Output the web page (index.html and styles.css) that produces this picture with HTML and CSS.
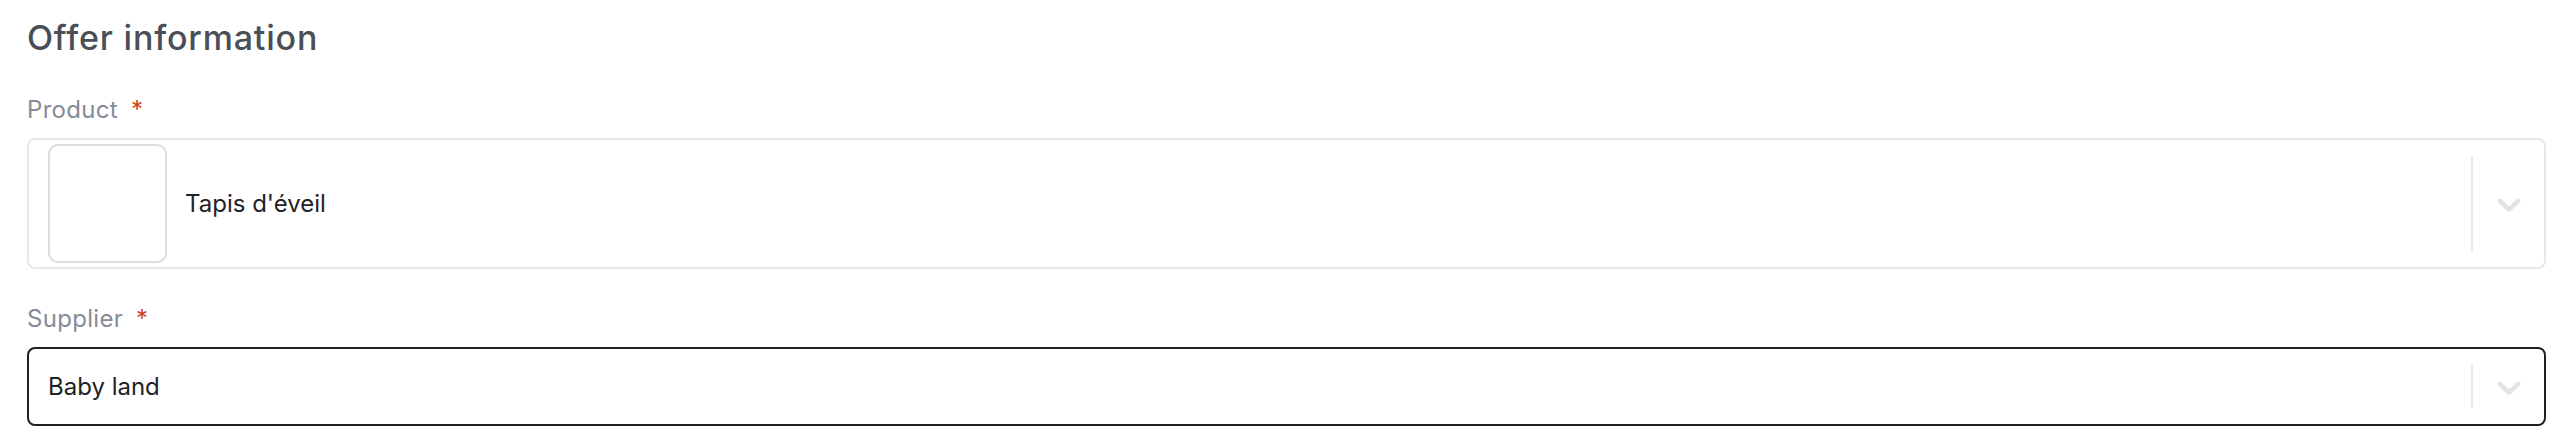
FILE: index.html
```html
<!DOCTYPE html>
<html lang="en">
<head>
    <meta charset="UTF-8">
    <meta name="viewport" content="width=device-width, initial-scale=1.0">
    <title>Offer information</title>
    <link rel="stylesheet" href="styles.css">
</head>
<body>
    <div class="offer-form">
        <h2>Offer information</h2>

        <!-- Product select -->
        <div class="field">
            <label class="field-label">Product <span class="required">*</span></label>
            <div class="select select-product">
                <div class="select-value">
                    <div class="product-thumb"></div>
                    <span class="select-text">Tapis d'éveil</span>
                </div>
                <span class="select-separator"></span>
                <div class="select-indicator">
                    <svg viewBox="0 0 20 20" width="40" height="40"><path d="M4.516 7.548c0.436-0.446 1.043-0.481 1.576 0l3.908 3.747 3.908-3.747c0.533-0.481 1.141-0.446 1.574 0 0.436 0.445 0.408 1.197 0 1.615-0.406 0.418-4.695 4.502-4.695 4.502-0.217 0.223-0.502 0.335-0.787 0.335s-0.57-0.112-0.789-0.335c0 0-4.287-4.084-4.695-4.502s-0.436-1.17 0-1.615z"></path></svg>
                </div>
            </div>
        </div>

        <!-- Supplier select (focused) -->
        <div class="field">
            <label class="field-label">Supplier <span class="required">*</span></label>
            <div class="select select-focused">
                <div class="select-value">
                    <span class="select-text">Baby land</span>
                </div>
                <span class="select-separator"></span>
                <div class="select-indicator">
                    <svg viewBox="0 0 20 20" width="40" height="40"><path d="M4.516 7.548c0.436-0.446 1.043-0.481 1.576 0l3.908 3.747 3.908-3.747c0.533-0.481 1.141-0.446 1.574 0 0.436 0.445 0.408 1.197 0 1.615-0.406 0.418-4.695 4.502-4.695 4.502-0.217 0.223-0.502 0.335-0.787 0.335s-0.57-0.112-0.789-0.335c0 0-4.287-4.084-4.695-4.502s-0.436-1.17 0-1.615z"></path></svg>
                </div>
            </div>
        </div>
    </div>
</body>
</html>
```

FILE: styles.css
```css
/* Reset */
* {
    margin: 0;
    padding: 0;
    box-sizing: border-box;
}

body {
    font-family: 'Inter', 'Noto Sans', sans-serif;
    background-color: #fff;
    color: #1f2226;
}

.offer-form {
    padding: 18px 20px 0 27px;
}

.offer-form h2 {
    font-size: 34px;
    line-height: 40px;
    font-weight: 500;
    letter-spacing: 0.8px;
    color: #4a4e56;
    margin-bottom: 36px;
}

/* Fields */
.field {
    margin-bottom: 34px;
}

.field-label {
    display: block;
    font-size: 24px;
    line-height: 32px;
    letter-spacing: 0.3px;
    color: #868b99;
    margin-bottom: 12px;
}

.field-label .required {
    color: #d0401c;
    margin-left: 6px;
}

/* Select boxes */
.select {
    display: flex;
    align-items: stretch;
    border: 2px solid #e8e8e8;
    border-radius: 8px;
    background-color: #fff;
    min-height: 79px;
}

.select-focused {
    border-color: #1f2125;
}

.select-value {
    flex-grow: 1;
    display: flex;
    align-items: center;
    gap: 18px;
    padding: 4px 19px;
}

.select-text {
    font-size: 24px;
    color: #1f2226;
}

.product-thumb {
    width: 119px;
    height: 119px;
    border: 2px solid #dcdcdc;
    border-radius: 10px;
}

.select-separator {
    width: 2px;
    margin: 16px 0;
    background-color: #e8e8e8;
}

.select-indicator {
    width: 71px;
    display: flex;
    align-items: center;
    justify-content: center;
}

.select-indicator svg {
    fill: #e3e3e3;
}
```
